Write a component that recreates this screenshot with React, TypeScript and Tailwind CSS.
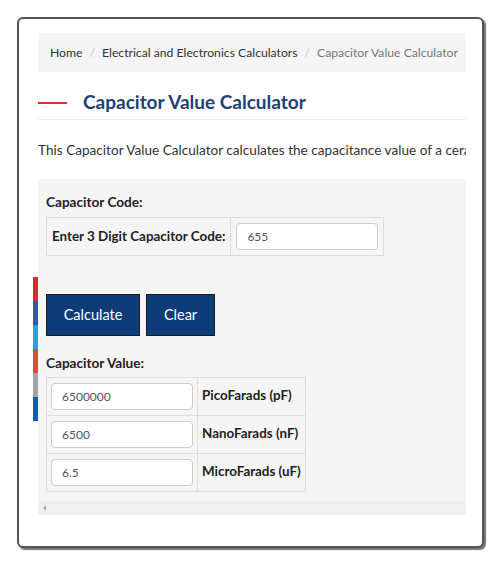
import React from 'react';

const shareColors = ['#d92b2b', '#3b5998', '#1da1f2', '#dd4b39', '#a3a3a3', '#0e5bc4'];

function ValueRow({ value, unit }: { value: string; unit: string }) {
  return (
    <tr>
      <td className="border border-[#dddddd] px-[4px] py-[5px] align-middle">
        <input
          readOnly
          value={value}
          className="block h-[27px] w-[142px] rounded-[4px] border border-[#cccccc] bg-white px-[10px] text-[12px] text-[#555555] outline-none"
        />
      </td>
      <td className="border border-[#dddddd] px-[4px] pb-[3px] align-middle text-[13.4px] font-bold text-[#222222] whitespace-nowrap">
        {unit}
      </td>
    </tr>
  );
}

export default function App() {
  return (
    <div
      className="relative h-[565px] w-[500px] bg-white pt-[17px] pl-[17px]"
      style={{ fontFamily: 'Lato, "Open Sans", sans-serif' }}
    >
      {/* share bar sticking out on the left */}
      <div className="absolute left-[33px] top-[277px] z-10 flex w-[5px] flex-col">
        {shareColors.map((c) => (
          <div key={c} className="h-[24px] w-full" style={{ backgroundColor: c }} />
        ))}
      </div>

      <div className="h-[531px] w-[467px] overflow-hidden rounded-[6px] border-2 border-[#555555] bg-white shadow-[2px_2px_1px_rgba(0,0,0,0.55)]">
        <div className="ml-[19px] mt-[14px] w-[428px] overflow-hidden">
          {/* breadcrumb */}
          <div className="flex h-[39px] items-center whitespace-nowrap bg-[#f5f5f5] px-[12px] pt-[2px] text-[12.2px] text-[#333333]">
            <span>Home</span>
            <span className="px-[7px] text-[#cccccc]">/</span>
            <span>Electrical and Electronics Calculators</span>
            <span className="px-[7px] text-[#cccccc]">/</span>
            <span className="text-[#777777]">Capacitor Value Calculator</span>
          </div>

          {/* title */}
          <div className="mt-[14px] flex h-[34px] items-center border-b border-[#eeeeee]">
            <div className="h-[2px] w-[29px] bg-[#e12a2a]" />
            <h1 className="ml-[16px] whitespace-nowrap text-[19px] font-bold text-[#1d4178]">
              Capacitor Value Calculator
            </h1>
          </div>

          <p className="mt-[20px] whitespace-nowrap text-[13.6px] text-[#333333]">
            This Capacitor Value Calculator calculates the capacitance value of a ceramic capacitor based on its 3 digit code.
          </p>

          {/* calculator panel */}
          <div className="mt-[19px] bg-[#f5f5f5]">
            <div className="px-[8px] pt-[13px] pb-[9px]">
              <div className="text-[13.6px] font-bold text-[#222222]">Capacitor Code:</div>
              <table className="mt-[4px] border-collapse">
                <tbody>
                  <tr>
                    <td className="border border-[#dddddd] px-[5px] py-[5px] text-[13.4px] font-bold text-[#222222] whitespace-nowrap">
                      Enter 3 Digit Capacitor Code:
                    </td>
                    <td className="border border-[#dddddd] px-[5px] py-[5px]">
                      <input
                        readOnly
                        value="655"
                        className="block h-[27px] w-[142px] rounded-[4px] border border-[#cccccc] bg-white px-[10px] text-[12px] text-[#555555] outline-none"
                      />
                    </td>
                  </tr>
                </tbody>
              </table>

              <div className="mt-[38px] flex gap-[6px]">
                <button className="h-[42px] w-[94px] border border-[#1c1c1c] bg-[#0e3c79] text-[14.5px] text-white">
                  Calculate
                </button>
                <button className="h-[42px] w-[69px] border border-[#1c1c1c] bg-[#0e3c79] text-[14.5px] text-white">
                  Clear
                </button>
              </div>

              <div className="mt-[17px] text-[13.6px] font-bold text-[#222222]">Capacitor Value:</div>
              <table className="mt-[4px] border-collapse">
                <tbody>
                  <ValueRow value="6500000" unit="PicoFarads (pF)" />
                  <ValueRow value="6500" unit="NanoFarads (nF)" />
                  <ValueRow value="6.5" unit="MicroFarads (uF)" />
                </tbody>
              </table>
            </div>
            {/* horizontal scrollbar */}
            <div className="flex h-[14px] items-center bg-[#f0f0f0] pl-[5px]">
              <div className="h-0 w-0 border-y-[3px] border-r-[3px] border-y-transparent border-r-[#aaaaaa]" />
            </div>
          </div>
        </div>
      </div>
    </div>
  );
}
